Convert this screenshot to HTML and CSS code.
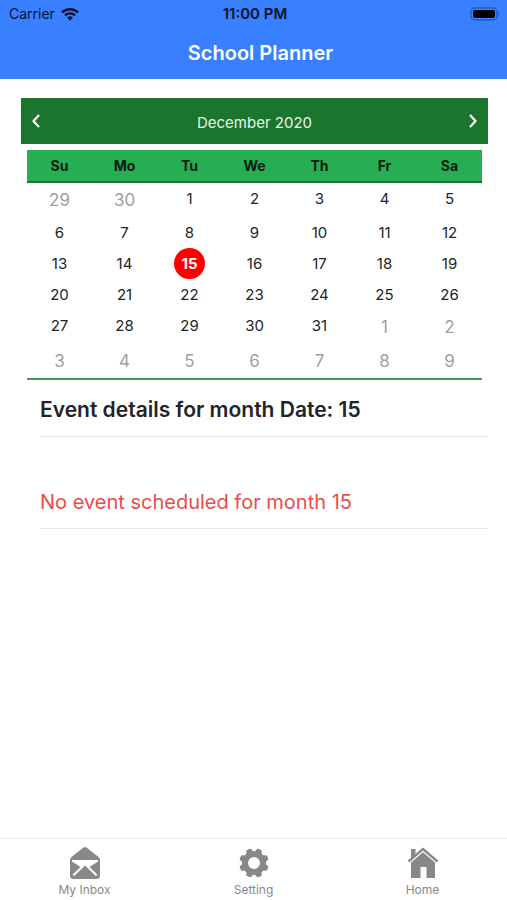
FILE: index.html
```html
<!DOCTYPE html>
<html lang="en">
<head>
<meta charset="utf-8">
<meta name="viewport" content="width=device-width, initial-scale=1">
<title>School Planner</title>
<link rel="stylesheet" href="styles.css">
</head>
<body>
<header class="app-header">
  <div class="status-bar">
    <span class="carrier">Carrier
      <svg width="18" height="14" viewBox="0 0 18 14" aria-hidden="true">
        <path d="M1 5.400a11.500 11.500 0 0 1 16 0" fill="none" stroke="currentColor" stroke-width="2.500"/>
        <path d="M3.900 8.400a7.300 7.300 0 0 1 10.200 0" fill="none" stroke="currentColor" stroke-width="2.300"/>
        <path d="M9 13.600 6 10.700a4.300 4.300 0 0 1 6 0z" fill="currentColor"/>
      </svg>
    </span>
    <span class="clock">11:00 PM</span>
    <svg class="battery" width="31" height="14" viewBox="0 0 31 14" aria-hidden="true">
      <rect x="1" y="1" width="26" height="12" rx="4" fill="none" stroke="#235bc0" stroke-width="1.500"/>
      <rect x="3" y="3" width="22" height="8" rx="2" fill="#000"/>
      <path d="M28.500 4.500q2 2.500 0 5z" fill="#235bc0"/>
    </svg>
  </div>
  <h1 class="title">School Planner</h1>
</header>
<main class="content">
  <section class="calendar">
    <div class="month-bar">
      <button class="arrow" type="button" aria-label="Previous month">
        <svg width="10" height="14" viewBox="0 0 10 14"><path d="M8 1 2.500 7 8 13" fill="none" stroke="currentColor" stroke-width="2.200"/></svg>
      </button>
      <h2 class="month">December 2020</h2>
      <button class="arrow" type="button" aria-label="Next month">
        <svg width="10" height="14" viewBox="0 0 10 14"><path d="M2 1l5.500 6L2 13" fill="none" stroke="currentColor" stroke-width="2.200"/></svg>
      </button>
    </div>
    <table class="days">
      <thead>
        <tr><th>Su</th><th>Mo</th><th>Tu</th><th>We</th><th>Th</th><th>Fr</th><th>Sa</th></tr>
      </thead>
      <tbody>
        <tr><td class="other">29</td><td class="other">30</td><td>1</td><td>2</td><td>3</td><td>4</td><td>5</td></tr>
        <tr><td>6</td><td>7</td><td>8</td><td>9</td><td>10</td><td>11</td><td>12</td></tr>
        <tr><td>13</td><td>14</td><td><span class="today">15</span></td><td>16</td><td>17</td><td>18</td><td>19</td></tr>
        <tr><td>20</td><td>21</td><td>22</td><td>23</td><td>24</td><td>25</td><td>26</td></tr>
        <tr><td>27</td><td>28</td><td>29</td><td>30</td><td>31</td><td class="other">1</td><td class="other">2</td></tr>
        <tr><td class="other">3</td><td class="other">4</td><td class="other">5</td><td class="other">6</td><td class="other">7</td><td class="other">8</td><td class="other">9</td></tr>
      </tbody>
    </table>
  </section>
  <section class="events">
    <h2 class="event-row event-title">Event details for month Date: 15</h2>
    <p class="event-row event-empty">No event scheduled for month 15</p>
  </section>
</main>
<nav class="tabs">
  <a class="tab" href="#inbox">
    <svg width="32" height="34" viewBox="0 0 32 34" aria-hidden="true">
      <path d="M14.500 1.500q1.500-1 3 0L29.500 11q1.500 1.200 1.500 3v15.500q0 3.500-3.500 3.500h-23Q1 33 1 29.500V14q0-1.800 1.500-3z" fill="currentColor"/>
      <path d="M3 14h26v1.500L20.500 21l7.800 7.500-1.300 1.700L16 19.500 5 30.200l-1.300-1.700 7.800-7.500L3 15.500z" fill="#fff"/>
    </svg>
    <span>My Inbox</span>
  </a>
  <a class="tab" href="#setting">
    <svg width="32" height="34" viewBox="-16 -17 32 34" aria-hidden="true">
      <g fill="currentColor">
        <circle r="9" fill="none" stroke="currentColor" stroke-width="6"/>
        <g id="teeth">
          <path d="M-3.600-11-2.600-14q.3-.8 1.100-.8h3q.8 0 1.100.8l1 3z" transform="rotate(22.500)"/>
          <path d="M-3.600-11-2.600-14q.3-.8 1.100-.8h3q.8 0 1.100.8l1 3z" transform="rotate(67.500)"/>
          <path d="M-3.600-11-2.600-14q.3-.8 1.100-.8h3q.8 0 1.100.8l1 3z" transform="rotate(112.500)"/>
          <path d="M-3.600-11-2.600-14q.3-.8 1.100-.8h3q.8 0 1.100.8l1 3z" transform="rotate(157.500)"/>
        </g>
        <use href="#teeth" transform="rotate(180)"/>
      </g>
    </svg>
    <span>Setting</span>
  </a>
  <a class="tab" href="#home">
    <svg width="32" height="34" viewBox="0 0 32 34" aria-hidden="true">
      <path d="M4 3h4.500v6.500L4 13.500z" fill="currentColor"/>
      <path d="M1.500 15.500 16 3l14.500 12.500" fill="none" stroke="currentColor" stroke-width="2.400"/>
      <path d="M4 16.500 16 6.200l12 10.300V32h-8.500V21h-6v11H4z" fill="currentColor"/>
    </svg>
    <span>Home</span>
  </a>
</nav>
</body>
</html>
```
FILE: styles.css
```css
* {
  box-sizing: border-box;
}

body {
  margin: 0;
  min-height: 100vh;
  display: flex;
  flex-direction: column;
  background: #fff;
  color: #222428;
  font-family: Inter, "Liberation Sans", sans-serif;
}

h1,
h2,
p {
  margin: 0;
}

svg {
  display: block;
}

.app-header {
  background: #3880ff;
  padding-bottom: 12px;
}

.status-bar {
  display: grid;
  grid-template-columns: 1fr auto 1fr;
  align-items: center;
  height: 27px;
  padding: 0 6px 0 9px;
  color: #06142e;
  font-size: 14px;
}

.carrier {
  display: flex;
  align-items: center;
  gap: 6px;
}

.clock {
  font-size: 15px;
  font-weight: 600;
}

.battery {
  justify-self: end;
}

.title {
  padding: 12px 0 0 14px;
  color: #fff;
  font-size: 20px;
  font-weight: 600;
  line-height: 28px;
  text-align: center;
}

.content {
  flex: 1;
  padding: 19px 19px 0 21px;
}

.month-bar {
  display: flex;
  align-items: center;
  justify-content: space-between;
  height: 46px;
  background: #1b752c;
  color: #fff;
}

.arrow {
  padding: 8px 10px;
  border: 0;
  background: none;
  color: inherit;
}

.month {
  padding-top: 4px;
  color: #e6f5e8;
  font-size: 15px;
  font-weight: 400;
  line-height: 20px;
}

.days {
  width: calc(100% - 12px);
  margin: 6px 6px 0;
  border-collapse: separate;
  border-spacing: 0;
  border-bottom: 2px solid #4f9459;
  table-layout: fixed;
  text-align: center;
}

.days th {
  height: 33px;
  padding: 0;
  background: #27ae55;
  border-bottom: 2px solid #1b752c;
  color: #061c0c;
  font-size: 14px;
  font-weight: 700;
}

.days td {
  padding: 0;
  font-size: 15px;
  line-height: 31px;
  vertical-align: top;
}

.days .other {
  color: #a0a0a0;
  font-size: 17px;
  line-height: 34px;
}

.today {
  display: block;
  width: 31px;
  margin: 0 auto;
  border-radius: 50%;
  background: #f00;
  color: #fff;
  font-weight: 700;
}

.events {
  padding-left: 19px;
}

.event-row {
  border-bottom: 1px solid #e6e6e6;
  font-size: 20px;
  line-height: 28px;
}

.event-title {
  padding: 16px 0 12px;
  font-size: 21px;
  font-weight: 600;
}

.event-empty {
  padding: 51px 0 12px;
  color: #eb4b4b;
}

.tabs {
  display: grid;
  grid-template-columns: repeat(3, 1fr);
  border-top: 1px solid #ececec;
}

.tab {
  display: flex;
  flex-direction: column;
  align-items: center;
  padding: 7px 0 0;
  color: #888;
  font-size: 12px;
  line-height: 20px;
  text-decoration: none;
}
```
